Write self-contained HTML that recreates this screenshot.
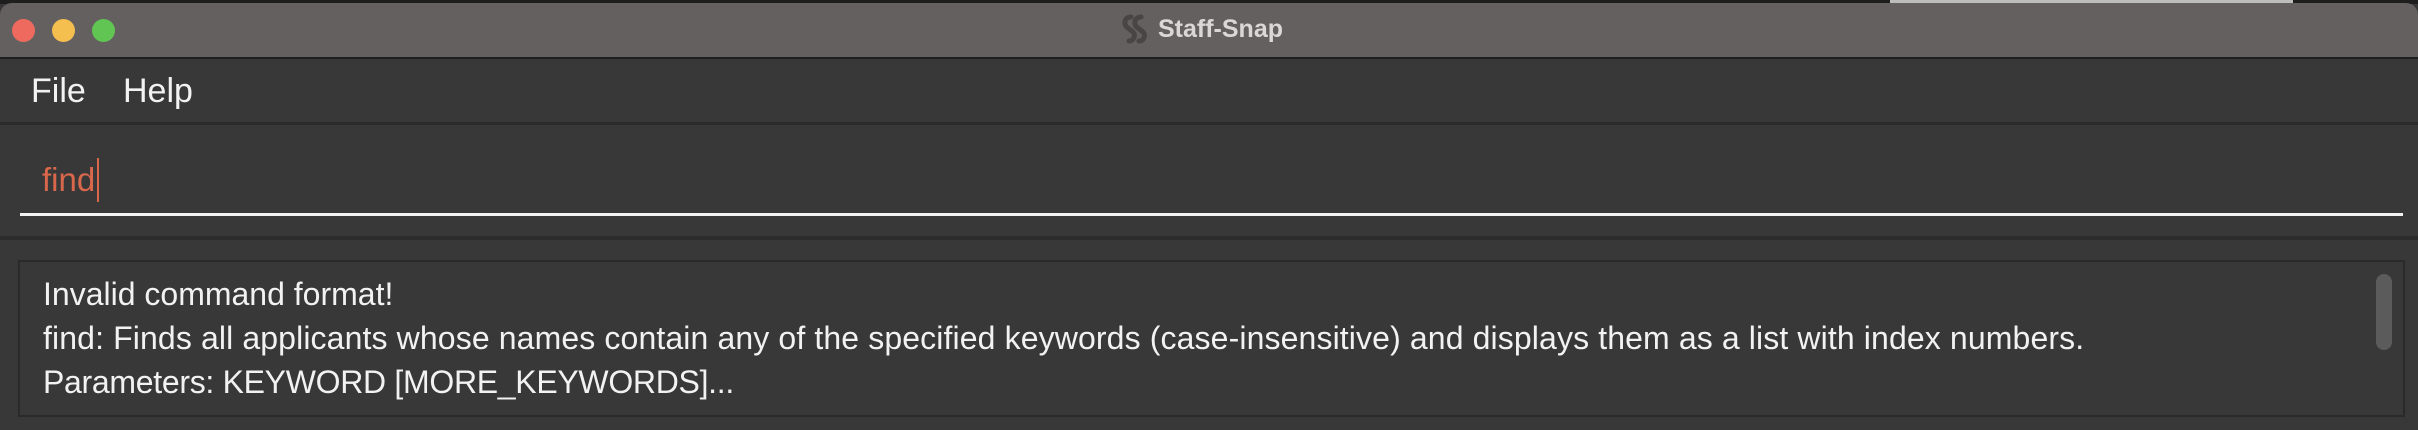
<!DOCTYPE html>
<html><head><meta charset="utf-8"><style>
html,body{margin:0;padding:0;width:2418px;height:430px;overflow:hidden;background:#383838;font-family:"Liberation Sans",sans-serif;}
.abs{position:absolute;}
</style></head><body>
<div class="abs" style="left:0;top:0;width:2418px;height:4px;background:#1e1e1e"></div>
<div class="abs" style="left:1890px;top:0;width:403px;height:3px;background:#bdbdbd"></div>
<div class="abs" style="left:0;top:3px;width:2418px;height:55px;background:#656060;border-radius:12px 12px 0 0"></div>
<div class="abs" style="left:0;top:57px;width:2418px;height:2px;background:#1f1f1f"></div>
<div class="abs" style="left:12px;top:19px;width:23px;height:23px;border-radius:50%;background:#ee6a5e"></div>
<div class="abs" style="left:52px;top:19px;width:23px;height:23px;border-radius:50%;background:#f5bf4f"></div>
<div class="abs" style="left:92px;top:19px;width:23px;height:23px;border-radius:50%;background:#61c554"></div>
<svg class="abs" style="left:1121px;top:14px" width="28" height="30" viewBox="0 0 28 30"><path d="M10 3 C3 3 2 11 7 14 L12 18 C15 21 13 27 8 27 M20 3 C13 3 12 11 17 14 L22 18 C25 21 23 27 18 27" stroke="#484545" stroke-width="5" fill="none" stroke-linecap="round"/></svg>
<div class="abs" style="left:1158px;top:14px;font-size:25px;font-weight:bold;color:#dcd7d7;line-height:30px">Staff-Snap</div>
<div class="abs" style="left:31px;top:69px;font-size:34px;color:#f2f2f2;line-height:44px">File</div>
<div class="abs" style="left:123px;top:69px;font-size:34px;color:#f2f2f2;line-height:44px">Help</div>
<div class="abs" style="left:0;top:122px;width:2418px;height:3px;background:#2b2b2b"></div>
<div class="abs" style="left:42px;top:158px;font-size:33px;color:#d9674c;line-height:44px">find</div>
<div class="abs" style="left:97px;top:158px;width:2px;height:44px;background:#d9674c"></div>
<div class="abs" style="left:20px;top:213px;width:2383px;height:3px;background:#f2f2f2"></div>
<div class="abs" style="left:0;top:236px;width:2418px;height:4px;background:#2c2c2c"></div>
<div class="abs" style="left:18px;top:260px;width:2383px;height:153px;border:2px solid #2a2a2a;background:#383838"></div>
<div class="abs" style="left:43px;top:272px;font-size:32px;color:#f2f2f2;line-height:44px;white-space:pre">Invalid command format!
<span style="letter-spacing:0.12px">find: Finds all applicants whose names contain any of the specified keywords (case-insensitive) and displays them as a list with index numbers.</span>
<span style="letter-spacing:-0.3px">Parameters: KEYWORD [MORE_KEYWORDS]...</span></div>
<div class="abs" style="left:2376px;top:274px;width:16px;height:76px;border-radius:8px;background:#5b5b5b"></div>
</body></html>
